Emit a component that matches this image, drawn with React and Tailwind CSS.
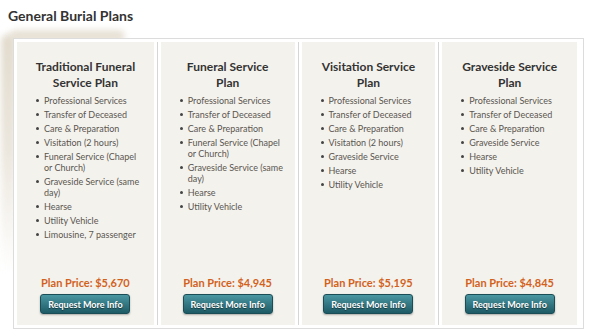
const plans = [
  {
    title: 'Traditional Funeral Service Plan',
    price: '$5,670',
    items: [
      'Professional Services',
      'Transfer of Deceased',
      'Care & Preparation',
      'Visitation (2 hours)',
      'Funeral Service (Chapel or Church)',
      'Graveside Service (same day)',
      'Hearse',
      'Utility Vehicle',
      'Limousine, 7 passenger',
    ],
  },
  {
    title: 'Funeral Service Plan',
    price: '$4,945',
    items: [
      'Professional Services',
      'Transfer of Deceased',
      'Care & Preparation',
      'Funeral Service (Chapel or Church)',
      'Graveside Service (same day)',
      'Hearse',
      'Utility Vehicle',
    ],
  },
  {
    title: 'Visitation Service Plan',
    price: '$5,195',
    items: [
      'Professional Services',
      'Transfer of Deceased',
      'Care & Preparation',
      'Visitation (2 hours)',
      'Graveside Service',
      'Hearse',
      'Utility Vehicle',
    ],
  },
  {
    title: 'Graveside Service Plan',
    price: '$4,845',
    items: [
      'Professional Services',
      'Transfer of Deceased',
      'Care & Preparation',
      'Graveside Service',
      'Hearse',
      'Utility Vehicle',
    ],
  },
];

function PlanCard({ plan }) {
  return (
    <div className="flex flex-col h-full bg-[#f4f2ed] pt-[17px] pb-[11px]">
      <h3 className="px-[14px] text-center text-[12px] leading-[16px] font-bold text-[#333]">
        {plan.title}
      </h3>
      <ul className="mt-[4px] pl-[19px] pr-[8px] flex flex-col gap-[3px]">
        {plan.items.map((item) => (
          <li key={item} className="flex items-start text-[9px] leading-[11px] text-[#5a5650]">
            <span className="mt-[4px] mr-[5px] w-[3px] h-[3px] shrink-0 rounded-full bg-[#444]" />
            <span>{item}</span>
          </li>
        ))}
      </ul>

      <div className="flex-1" />

      <p className="text-center text-[11px] leading-[14px] font-bold text-[#d2611c]">
        Plan Price: {plan.price}
      </p>
      <div className="mt-[4px] flex justify-center">
        <button className="w-[90px] h-[20px] rounded-[3px] border border-[#1b4d56] bg-gradient-to-b from-[#4a97a2] to-[#1d5b66] text-white text-[9px] font-bold leading-none shadow-[0_1px_2px_rgba(0,0,0,0.3)] [text-shadow:0_1px_1px_rgba(0,0,0,0.5)]">
          Request More Info
        </button>
      </div>
    </div>
  );
}

export default function App() {
  return (
    <div className="w-[591px] h-[336px] bg-white font-['Lato',sans-serif] relative overflow-hidden">
      {/* brush stroke behind the box */}
      <div className="absolute left-[10px] top-[30px] w-[115px] h-[12px] rounded-full bg-[#e7e1d5] blur-[3px]" />
      <div className="absolute left-[1px] top-[34px] w-[15px] h-[240px] rounded-full bg-gradient-to-b from-[#e2dbcd] via-[#ece7de] to-transparent blur-[3px]" />

      <h2 className="relative px-[8px] pt-[6px] text-[14px] leading-[20px] font-bold text-[#333]">
        General Burial Plans
      </h2>

      <div className="relative mt-[12px] ml-[13px] w-[571px] h-[291px] bg-white border border-[#dcdcdc] p-[3px]">
        <div className="grid grid-cols-4 h-full divide-x divide-[#d6d6d6]">
          {plans.map((plan, i) => (
            <div key={plan.title} className={i === 0 ? 'pr-[3px]' : 'px-[3px]'}>
              <PlanCard plan={plan} />
            </div>
          ))}
        </div>
      </div>
    </div>
  );
}
